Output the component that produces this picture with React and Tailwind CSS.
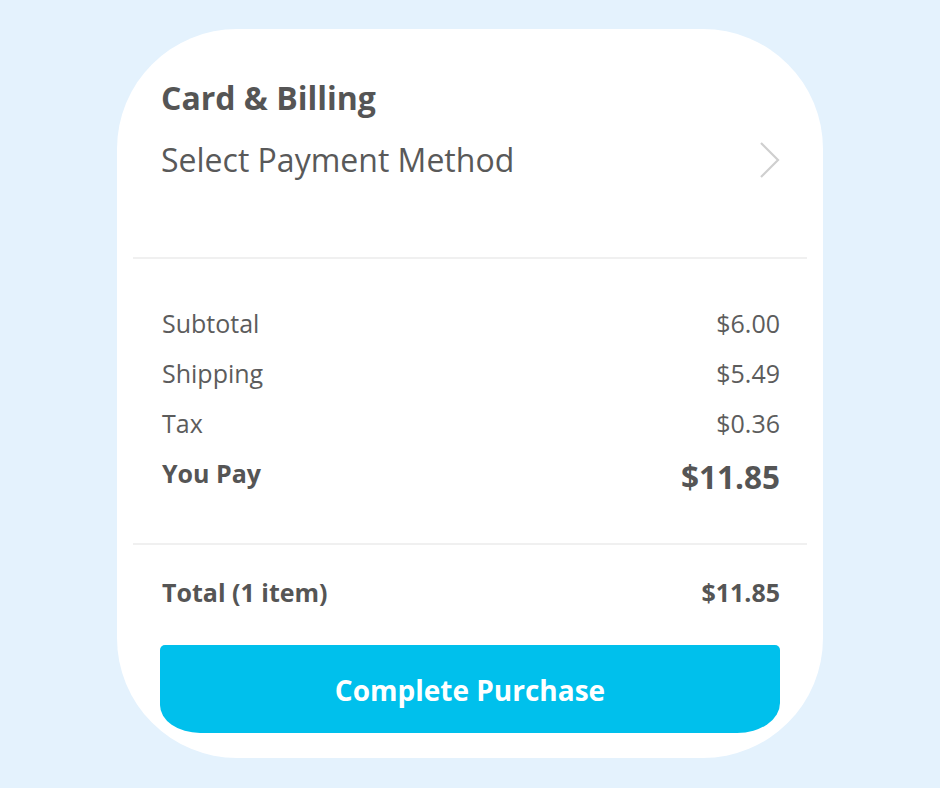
const rows = [
  { label: 'Subtotal', value: '$6.00' },
  { label: 'Shipping', value: '$5.49' },
  { label: 'Tax', value: '$0.36' },
];

const App = () => {
  return (
    <div
      className="min-h-[788px] bg-[#e4f2fd] flex justify-center pt-[29px]"
      style={{ fontFamily: '"Open Sans", "Noto Sans", sans-serif' }}
    >
      <div className="w-[706px] h-[729px] bg-white rounded-[120px] px-[16px] flex flex-col">
        {/* Card & Billing */}
        <div className="px-[28px] pt-[49px]">
          <h2 className="text-[32px] leading-[40px] font-bold text-[#555]">Card &amp; Billing</h2>
          <div className="mt-[20px] flex items-center justify-between">
            <span className="text-[32px] leading-[44px] text-[#595959]">Select Payment Method</span>
            <svg width="22" height="38" viewBox="0 0 22 38" fill="none" className="mr-[-2px]">
              <path d="M2 2 L19 19 L2 36" stroke="#cfcfcf" strokeWidth="2.2" />
            </svg>
          </div>
        </div>

        <div className="mt-[75px] h-[2px] bg-[#f0f0f0]" />

        {/* Summary */}
        <div className="pl-[29px] pr-[27px] pt-[39px] pb-[37px]">
          {rows.map((r) => (
            <div key={r.label} className="flex justify-between text-[25px] leading-[50px] text-[#5c5c5c]">
              <span>{r.label}</span>
              <span>{r.value}</span>
            </div>
          ))}
          <div className="flex justify-between items-start">
            <span className="text-[25px] leading-[50px] font-bold text-[#555]">You Pay</span>
            <span className="text-[31.5px] leading-[58px] font-bold text-[#555]">$11.85</span>
          </div>
        </div>

        <div className="h-[2px] bg-[#f0f0f0]" />

        <div className="pl-[29px] pr-[27px] pt-[22px] flex justify-between text-[25px] leading-[50px] font-bold text-[#555]">
          <span>Total (1 item)</span>
          <span>$11.85</span>
        </div>

        <div className="px-[27px] mt-[28px]">
          <button className="w-full h-[88px] bg-[#00c0ec] text-white text-[28px] font-bold rounded-t-[5px] rounded-bl-[40px_28px] rounded-br-[43px_30px] pt-[2px]">
            Complete Purchase
          </button>
        </div>
      </div>
    </div>
  );
};

export default App;
